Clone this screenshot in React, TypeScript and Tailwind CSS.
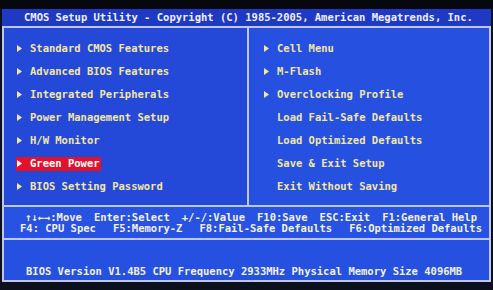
import React from 'react';

interface MenuItem {
  label: string;
  arrow?: boolean;
  selected?: boolean;
}

const leftMenu: MenuItem[] = [
  { label: 'Standard CMOS Features', arrow: true },
  { label: 'Advanced BIOS Features', arrow: true },
  { label: 'Integrated Peripherals', arrow: true },
  { label: 'Power Management Setup', arrow: true },
  { label: 'H/W Monitor', arrow: true },
  { label: 'Green Power', arrow: true, selected: true },
  { label: 'BIOS Setting Password', arrow: true },
];

const rightMenu: MenuItem[] = [
  { label: 'Cell Menu', arrow: true },
  { label: 'M-Flash', arrow: true },
  { label: 'Overclocking Profile', arrow: true },
  { label: 'Load Fail-Safe Defaults' },
  { label: 'Load Optimized Defaults' },
  { label: 'Save & Exit Setup' },
  { label: 'Exit Without Saving' },
];

const Arrow: React.FC<{ color: string }> = ({ color }) => (
  <svg width="5" height="7" viewBox="0 0 5 7" className="shrink-0">
    <polygon points="0,0 5,3.5 0,7" fill={color} />
  </svg>
);

const MenuRow: React.FC<{ item: MenuItem }> = ({ item }) => (
  <div className="h-[23px] flex items-center">
    <div
      className={`h-[14px] flex items-center px-[1px] ${
        item.selected ? 'bg-[#e3122c] text-white' : 'text-[#f3e6a8]'
      }`}
    >
      <div className="w-[5px] flex items-center">
        {item.arrow && <Arrow color={item.selected ? '#ffffff' : '#f3e6a8'} />}
      </div>
      <span className="ml-[8px] whitespace-pre leading-none">{item.label}</span>
    </div>
  </div>
);

const App: React.FC = () => {
  return (
    <div className="w-[493px] h-[290px] overflow-hidden bg-[#0c0f1c] font-['DejaVu_Sans_Mono',monospace] font-bold text-[10.5px]">
      <div className="h-[9px] bg-[#07080d]" />

      {/* title bar */}
      <div className="h-[17px] mx-[2px] bg-[#1e39c2] flex items-center pl-[22px] text-[#eef0ff] whitespace-pre leading-none">
        CMOS Setup Utility - Copyright (C) 1985-2005, American Megatrends, Inc.
      </div>

      <div className="mx-[2px] border-2 border-[#bfc6ef] bg-[#2449d9]">
        {/* menu panels */}
        <div className="grid grid-cols-[245px_1fr] h-[179px] border-b-2 border-[#bfc6ef]">
          <div className="border-r-2 border-[#bfc6ef] pt-[9px] pl-[12px]">
            {leftMenu.map((item) => (
              <MenuRow key={item.label} item={item} />
            ))}
          </div>
          <div className="pt-[9px] pl-[14px] bg-[#2550e0]">
            {rightMenu.map((item) => (
              <MenuRow key={item.label} item={item} />
            ))}
          </div>
        </div>

        {/* key help */}
        <div className="h-[33px] border-b-2 border-[#bfc6ef] pt-[5px] text-[#f2f1e4] leading-[10.5px] bg-[#2852e2]">
          <div className="flex justify-between pl-[21px] pr-[12px] whitespace-pre">
            <span>↑↓←→:Move</span>
            <span>Enter:Select</span>
            <span>+/-/:Value</span>
            <span>F10:Save</span>
            <span>ESC:Exit</span>
            <span>F1:General Help</span>
          </div>
          <div className="flex justify-between pl-[16px] pr-[7px] whitespace-pre">
            <span>F4: CPU Spec</span>
            <span>F5:Memory-Z</span>
            <span>F8:Fail-Safe Defaults</span>
            <span>F6:Optimized Defaults</span>
          </div>
        </div>

        {/* system info */}
        <div className="h-[40px] pt-[25px] pl-[22px] text-[#f2f1e6] leading-[12px] whitespace-pre bg-[#2550e0]">
          BIOS Version V1.4B5 CPU Frequency 2933MHz Physical Memory Size 4096MB
        </div>
      </div>
    </div>
  );
};

export default App;
